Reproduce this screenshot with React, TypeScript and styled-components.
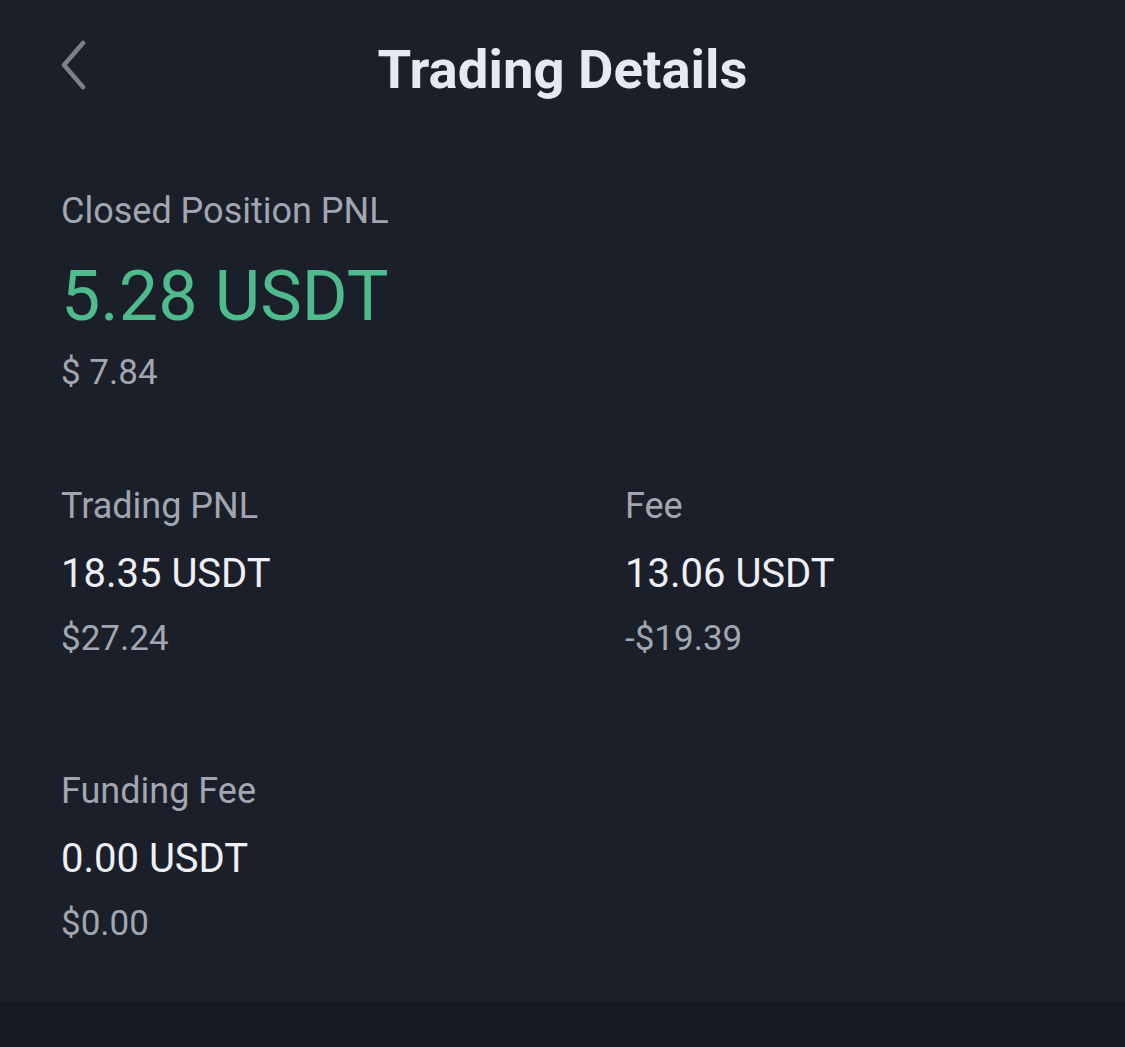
import styled, { createGlobalStyle } from 'styled-components';

const GlobalStyle = createGlobalStyle`
  html, body {
    margin: 0;
    padding: 0;
    background: #1b1f2a;
  }
  * {
    box-sizing: border-box;
  }
`;

const Page = styled.div`
  width: 1125px;
  height: 1047px;
  display: flex;
  flex-direction: column;
  background: #1b1f2a;
  font-family: Roboto, 'Liberation Sans', sans-serif;
  overflow: hidden;
`;

const Header = styled.header`
  position: relative;
  height: 140px;
  padding-top: 37px;
  display: flex;
  justify-content: center;
`;

const BackButton = styled.button`
  position: absolute;
  left: 53px;
  top: 40px;
  width: 40px;
  height: 50px;
  padding: 0;
  background: none;
  border: 0;
  display: flex;
  align-items: center;
  justify-content: center;
`;

const Title = styled.h1`
  margin: 0;
  font-size: 54.5px;
  line-height: 64px;
  font-weight: 700;
  color: #e6e9f2;
`;

const Content = styled.main`
  flex: 1;
  padding: 49px 61px 0;
  display: flex;
  flex-direction: column;
`;

const Block = styled.section`
  display: flex;
  flex-direction: column;
`;

const Grid = styled.div`
  display: grid;
  grid-template-columns: 564px 1fr;
  row-gap: 108px;
  margin-top: 89px;
`;

const Label = styled.div`
  font-size: 36px;
  line-height: 44px;
  color: #a2a6b0;
`;

const Amount = styled.div<{ $big?: boolean }>`
  font-size: ${(p) => (p.$big ? '70px' : '40px')};
  line-height: ${(p) => (p.$big ? '80px' : '48px')};
  margin-top: ${(p) => (p.$big ? '23px' : '22px')};
  color: ${(p) => (p.$big ? '#4dbb8b' : '#eef0f5')};
`;

const Fiat = styled.div<{ $big?: boolean }>`
  font-size: 35px;
  line-height: 44px;
  margin-top: ${(p) => (p.$big ? '15px' : '19px')};
  color: #a2a6b0;
`;

const BottomBar = styled.div`
  height: 45px;
  background: #151922;
`;

const items = [
  { label: 'Trading PNL', amount: '18.35 USDT', fiat: '$27.24' },
  { label: 'Fee', amount: '13.06 USDT', fiat: '-$19.39' },
  { label: 'Funding Fee', amount: '0.00 USDT', fiat: '$0.00' },
];

export default function App() {
  return (
    <>
      <GlobalStyle />
      <Page>
        <Header>
          <BackButton aria-label="Back">
            <svg width="32" height="50" viewBox="0 0 32 50" fill="none">
              <path
                d="M26 3 L7 25 L26 47"
                stroke="#7c808a"
                strokeWidth="4.5"
                strokeLinecap="round"
                strokeLinejoin="round"
              />
            </svg>
          </BackButton>
          <Title>Trading Details</Title>
        </Header>
        <Content>
          <Block>
            <Label>Closed Position PNL</Label>
            <Amount $big>5.28 USDT</Amount>
            <Fiat $big>$ 7.84</Fiat>
          </Block>
          <Grid>
            {items.map((it) => (
              <Block key={it.label}>
                <Label>{it.label}</Label>
                <Amount>{it.amount}</Amount>
                <Fiat>{it.fiat}</Fiat>
              </Block>
            ))}
          </Grid>
        </Content>
        <BottomBar />
      </Page>
    </>
  );
}
